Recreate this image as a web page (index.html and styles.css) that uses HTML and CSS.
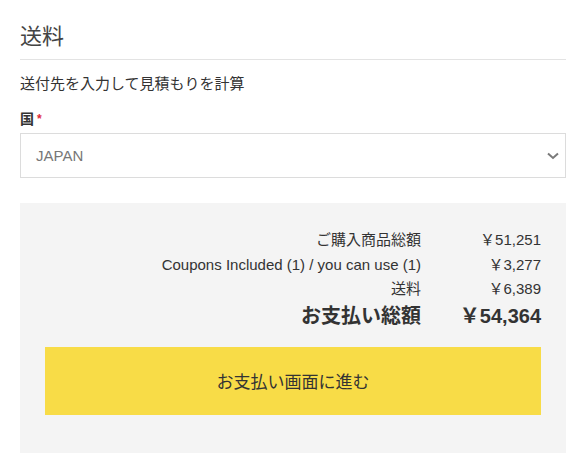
FILE: index.html
```html
<!DOCTYPE html>
<html lang="ja">
<head>
<meta charset="utf-8">
<link rel="stylesheet" href="styles.css">
</head>
<body>
<div class="page">
  <h2 class="title">送料</h2>
  <p class="lead">送付先を入力して見積もりを計算</p>
  <label class="field-label">国<span class="req">*</span></label>
  <div class="select">
    <span class="select-value">JAPAN</span>
    <svg class="chev" width="12" height="8" viewBox="0 0 12 8"><polyline points="1,1.5 6,6 11,1.5" fill="none" stroke="#7a7a7a" stroke-width="2"/></svg>
  </div>
  <div class="summary">
    <div class="rows">
      <div class="lbl">ご購入商品総額</div><div class="val">￥51,251</div>
      <div class="lbl">Coupons Included (1) / you can use (1)</div><div class="val">￥3,277</div>
      <div class="lbl">送料</div><div class="val">￥6,389</div>
      <div class="lbl total">お支払い総額</div><div class="val total">￥54,364</div>
    </div>
    <button class="pay">お支払い画面に進む</button>
  </div>
</div>
</body>
</html>
```

FILE: styles.css
```css
* { box-sizing: border-box; }
body {
  margin: 0;
  background: #fff;
  color: #333;
  font-family: "Liberation Sans", Arial, "Noto Sans CJK JP", sans-serif;
}
.page {
  padding: 0 20px;
}
.title {
  margin: 0;
  padding: 21px 0 6px;
  font-size: 22px;
  line-height: 32px;
  font-weight: normal;
  color: #444;
  border-bottom: 1px solid #e3e3e3;
}
.lead {
  margin: 14px 0 0;
  font-size: 15px;
  line-height: 20px;
}
.field-label {
  display: block;
  margin-top: 16px;
  font-size: 14px;
  line-height: 18px;
  font-weight: bold;
}
.req {
  color: #e0283a;
  font-size: 12px;
  margin-left: 3px;
  vertical-align: top;
}
.select {
  margin-top: 5px;
  height: 45px;
  border: 1px solid #dcdcdc;
  display: flex;
  align-items: center;
  justify-content: space-between;
  padding: 0 6px 0 15px;
}
.select-value {
  font-size: 15px;
  color: #777;
}
.chev { display: block; margin-top: 1px; }
.summary {
  margin-top: 25px;
  background: #f4f4f4;
  padding: 25px 25px 38px;
}
.rows {
  display: grid;
  grid-template-columns: 1fr 120px;
  font-size: 15px;
  line-height: 24.5px;
}
.lbl, .val { text-align: right; }
.total {
  font-size: 20px;
  font-weight: bold;
  line-height: 28px;
}
.pay {
  display: block;
  width: 100%;
  margin-top: 17px;
  height: 68px;
  border: none;
  background: #f8dc47;
  color: #333;
  font-family: inherit;
  font-size: 17px;
  cursor: pointer;
}
```
